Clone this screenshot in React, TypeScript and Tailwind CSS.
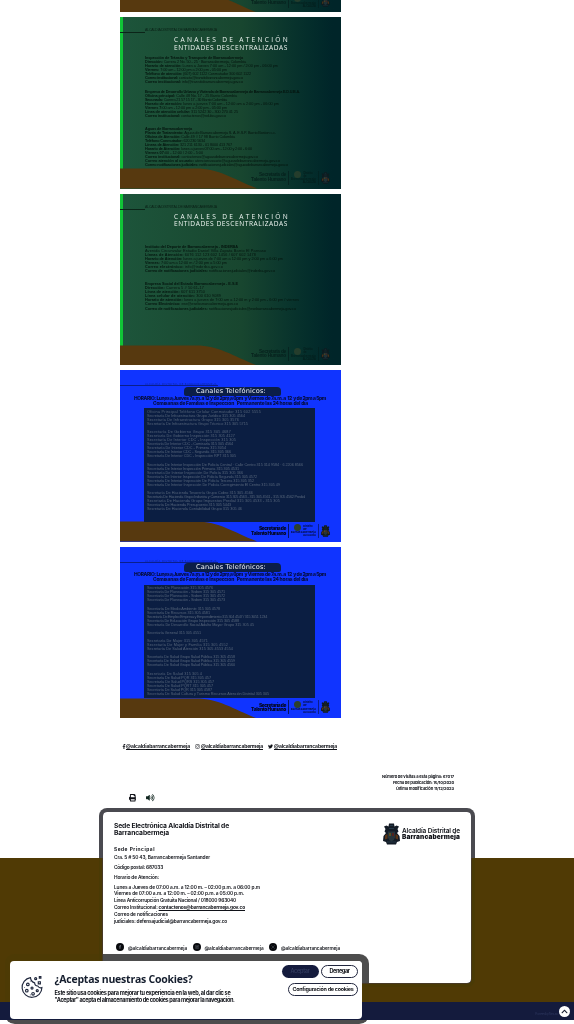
import React, { useLayoutEffect, useRef, useState } from "react";
import { FaFacebookF, FaInstagram, FaTwitter, FaPrint, FaVolumeUp, FaChevronUp } from "react-icons/fa";

/** Single line of text tracked so that it spans the given width. */
function Fit({ w, className = "", children }: { w: number; className?: string; children: React.ReactNode }) {
  const ref = useRef<HTMLSpanElement>(null);
  const [spacing, setSpacing] = useState(0);
  useLayoutEffect(() => {
    const el = ref.current;
    if (!el) return;
    const n = (el.textContent || "").length;
    if (n > 1) setSpacing((w - el.getBoundingClientRect().width) / n);
  }, [w]);
  return (
    <span className={`block whitespace-nowrap ${className}`}>
      <span ref={ref} style={{ letterSpacing: `${spacing}px` }}>{children}</span>
    </span>
  );
}

type Row = [string, number];

function Block({ rows, className, boldFirst = false }: { rows: Row[]; className: string; boldFirst?: boolean }) {
  return (
    <div className={className}>
      {rows.map(([t, w], i) => {
        const cut = t.indexOf(":");
        return (
          <Fit key={i} w={w} className={i === 0 && boldFirst ? "font-bold" : ""}>
            {boldFirst && cut > 0 ? (<><b>{t.slice(0, cut + 1)}</b>{t.slice(cut + 1)}</>) : t}
          </Fit>
        );
      })}
    </div>
  );
}

function Crest({ className, dark = false }: { className: string; dark?: boolean }) {
  return (
    <svg viewBox="0 0 34 44" className={className} preserveAspectRatio="none">
      <path d="M12 1h10l1 6 4-2 5 2-3 5 2 5-3 3 5 6 1 10-6 2-2 5H8l-2-5-6-2 1-10 5-6-3-3 2-5-3-5 5-2 4 2z" fill={dark ? "#131b26" : "#11191d"} />
      <path d="M10 17h14v12q-1 6-7 8-6-2-7-8z" fill="#26343b" />
      <path d="M4 25l5-3v9l-5 2zM25 22l5 3v8l-5-2z" fill="#5a3416" />
      <path d="M12 20h4v6h-4z" fill="#5a4c20" />
      <path d="M18 20h4v6h-4z" fill="#52231f" />
      <path d="M14 5h6M12 11h10M8 38h18" stroke="#2f4a5d" strokeWidth="1.2" />
    </svg>
  );
}

function Wave() {
  return (
    <svg viewBox="0 0 221 172" className="absolute inset-0 h-full w-full" preserveAspectRatio="none">
      <path d="M0 152H76C99 152 114 163 137 172H0z" fill="#57390f" />
    </svg>
  );
}

function Sign({ strong }: { strong: boolean }) {
  return (
    <div className={`absolute right-[11px] bottom-[3px] flex h-[16px] items-center gap-[2px] ${strong ? "text-[#03081f]" : "text-[#041a18] opacity-80"}`}>
      <div className="flex flex-col items-end text-[4.8px] leading-[4.4px] font-black">
        <Fit w={27}>Secretaría de</Fit>
        <Fit w={35}>Talento Humano</Fit>
      </div>
      <div className="h-[14px] w-px bg-current opacity-70" />
      <div className="flex w-[25px] flex-col items-center text-[2.6px] leading-[3px] font-bold">
        <div className="flex items-center gap-[2px]">
          <span className="h-[7px] w-[7px] rounded-full bg-[#2d402c]" />
          <span>Distrito<br />de</span>
        </div>
        <Fit w={25}>Barrancabermeja</Fit>
        <span className="self-end">ALCALDÍA</span>
      </div>
      <div className="h-[14px] w-px bg-current opacity-50" />
      <Crest className="h-[12px] w-[9px]" />
    </div>
  );
}

function GreenPoster({ children }: { children?: React.ReactNode }) {
  return (
    <div className="relative h-[171.5px] w-[221px] shrink-0 overflow-hidden bg-linear-to-r from-[#1d553b] via-[#18462f] via-55% to-[#002529] to-96% font-['Liberation_Sans'] text-[3.8px] leading-[4.1px] text-[#04140e]">
      <div className="absolute top-0 left-0 h-[153px] w-[3px] bg-[#10c536]" />
      <Wave />
      <div className="relative pl-[25px]">{children}</div>
      <Sign strong={false} />
    </div>
  );
}

function GreenHead() {
  return (
    <>
      <div className="-ml-[25px] flex h-[19px] flex-col justify-end pb-[3px]">
        <Fit w={72} className="pl-[25px] text-[3.5px] leading-[3.2px] text-[#0a2016]">ALCALDÍA DISTRITAL DE BARRANCABERMEJA</Fit>
        <div className="h-[0.6px] w-[25px] bg-[#0b2418]" />
      </div>
      <div className="ml-[29px] font-['Open_Sans'] text-[6.6px] leading-[7.5px] font-medium text-[#eef5f1]">
        <Fit w={116}>CANALES DE ATENCIÓN</Fit>
        <Fit w={114}>ENTIDADES DESCENTRALIZADAS</Fit>
      </div>
    </>
  );
}

function BluePoster({ groups }: { groups: Row[][] }) {
  return (
    <div className="relative h-[171.5px] w-[221px] shrink-0 overflow-hidden bg-[#1034ff] font-['Inter']">
      <Wave />
      <div className="relative flex h-full flex-col">
        <div className="h-[13px] shrink-0" />
        <div className="h-[3px] w-[98px] shrink-0 border-b border-[#0a1f8c] pl-[25px] text-[2.6px] leading-[2.5px] text-[#0b2396]">
          <Fit w={72}>ALCALDÍA DISTRITAL DE BARRANCABERMEJA</Fit>
        </div>
        <div className="ml-[64px] mt-[0.5px] h-[9px] w-[97px] shrink-0 rounded-t-[4px] rounded-b-[2px] bg-[#0b1e48] pl-[12px] font-['DejaVu_Sans'] text-[6.6px] leading-[9px] text-[#eef2f6]">
          <Fit w={70}>Canales Telefónicos:</Fit>
        </div>
        <div className="shrink-0 text-[4.9px] leading-[5.4px] font-extrabold text-[#050d3d]">
          <Fit w={192} className="pl-[14px]">HORARIO: Lunes a Jueves 7a.m. a 12 y de 2pm a 6pm &nbsp;y Viernes de 7a.m. a &nbsp;12 &nbsp;y de 2pm a 5pm</Fit>
          <Fit w={155} className="pl-[33px]">Comisarías de Familias e Inspección &nbsp; Permanente las 24 horas del día</Fit>
        </div>
        <div className="mt-[2px] ml-[24px] flex h-[113.5px] w-[171px] shrink-0 flex-col gap-[4.1px] bg-[#0b1e42] pt-[1.5px] pl-[3px] font-['Liberation_Sans'] text-[3.8px] leading-[4.05px] text-[#56657a]">
          {groups.map((g, i) => <Block key={i} rows={g} className="shrink-0" />)}
        </div>
      </div>
      <Sign strong />
    </div>
  );
}

const transit: Row[] = [
  ["Inspección de Tránsito y Transporte de Barrancabermeja", 98],
  ["Dirección: Carrera 2 No. 50 - 25 · Barrancabermeja, Colombia", 101],
  ["Horario de atención: Lunes a Jueves 7:00 am - 12:00 pm / 2:00 pm - 06:00 pm", 133],
  ["Viernes: 7:00 am - 12:00 pm a 2:00 pm - 05:00 pm", 82],
  ["Teléfono de atención: (607) 602 1122 Conmutador 300 602 1122", 106],
  ["Correo institucional: contacto@transitobarrancabermeja.gov.co", 98],
  ["Correo institucional: info@transitobarrancabermeja.gov.co", 98],
];
const eduba: Row[] = [
  ["Empresa de Desarrollo Urbano y Vivienda de Barrancabermeja de Barrancabermeja E.D.U.B.A.", 155],
  ["Oficina principal: Calle 48 No. 17 - 25 Barrio Colombia", 92],
  ["Secunada: Carrera 21 57 15 17 - 30 Barrio Colombia", 82],
  ["Horario de atención: lunes a jueves 7:00 am - 12:00 am a 2:00 pm - 06:00 pm", 134],
  ["Viernes 7:00 am - 12:00 pm a 2:00 pm - 05:00 pm", 82],
  ["Línea de atención celular: 311 5242 30 - 300 270 41 25", 93],
  ["Correo institucional: contactenos@eduba.gov.co", 81],
];
const aguas: Row[] = [
  ["Aguas de Barrancabermeja", 47],
  ["Planta de Tratamiento: Aguas de Barrancabermeja S. A. E.S.P. Barrio Boston c.c.", 131],
  ["Oficina de Atención: Calle 49 # 17 98 Barrio Colombia", 90],
  ["Teléfono Conmutador: 620 230 5634", 60],
  ["Líneas de Atención: 321 211 6130 - 01 8000 413 767", 87],
  ["Horario de Atención: lunes a jueves 07:00 am - 12:00 y 2:00 - 6:00", 107],
  ["Viernes 07:00 - 12:00 / 2:00 - 5:00", 58],
  ["Correo institucional: contactenos@aguasdebarrancabermeja.gov.co", 113],
  ["Correo atención al usuario: atencionusuario@aguasdebarrancabermeja.gov.co", 135],
  ["Correo notificaciones judiciales: notificacionesjudiciales@aguasdebarrancabermeja.gov.co", 143],
];
const inderba: Row[] = [
  ["Instituto del Deporte de Barrancabermeja - INDERBA", 93],
  ["Avenida Circunvalar Estadio Daniel Villa Zapata Barrio El Parnaso", 121],
  ["Líneas de Atención: 6076 112 123 602 1456 / 607 602 1478", 111],
  ["Horario de Atención: lunes a jueves de 7:00 am a 12:00 pm y 2:00 pm a 6:00 pm", 138],
  ["Viernes: 7:00 am a 12:00 m / 2:00 pm a 5:00 pm", 82],
  ["Correo electrónico: info@inderba.gov.co", 78],
  ["Correo de notificaciones judiciales: notificacionesjudiciales@inderba.gov.co", 130],
];
const ese: Row[] = [
  ["Empresa Social del Estado Barrancabermeja - E.S.E", 93],
  ["Dirección: Carrera 5 # 50 61-17", 59],
  ["Línea de atención: 607 611 3750", 60],
  ["Línea celular de atención: 300 610 9089", 76],
  ["Horario de atención: lunes a jueves de 7:00 am a 12:00 m y 2:00 pm - 6:00 pm / viernes", 154],
  ["Correo Electrónico: ese@esebarrancabermeja.gov.co", 93],
  ["Correo de notificaciones judiciales: notificacionesjudiciales@esebarrancabermeja.gov.co", 151],
];

const phonesA: Row[][] = [
  [["Oficina Principal Teléfono Celular Conmutador 315 602 5555", 114], ["Secretaría De Infraestructura Grupo Jurídico 315 305 4564", 98], ["Secretaría De Infraestructura Grupo 315 305 3576", 92], ["Secretaría De Infraestructura Grupo Técnico 315 305 5715", 101]],
  [["Secretaría De Gobierno Grupo 315 305 4687", 84], ["Secretaría De Gobierno Inspección 315 305 4127", 88], ["Secretaría De Interior CDC - Inspección 315 305", 89], ["Secretaría De Interior CDC - Comisaría 315 305 4564", 86], ["Secretaría De Interior CDC - Primera 315 3054", 79], ["Secretaría De Interior CDC - Segunda 315 305 366", 84], ["Secretaría De Interior CDC - Inspección RPT 315 305", 89]],
  [["Secretaría De Interior Inspección De Policía Central · Calle Centro 315 314 9584 · 6 2206 8566", 156], ["Secretaría De Interior Inspección Primaria 315 305 4531", 92], ["Secretaría De Interior Inspección De Policía 315 305 366", 96], ["Secretaría De Interior Inspección De Policía Segunda 315 305 4572", 110], ["Secretaría De Interior Inspección De Policía Tercera 315 305 352", 107], ["Secretaría De Interior Inspección De Policía Corregimiento El Centro 315 305 49", 133]],
  [["Secretaría De Hacienda Tesorería Grupo Cobro 315 305 4566", 106], ["Secretaría De Hacienda Grupo Industria y Comercio 315 305 4563 - 315 305 4561 - 315 305 4562 Predial", 158], ["Secretaría De Hacienda Grupo Impuestos Predial 315 305 4533 - 315 305", 133], ["Secretaría De Hacienda Presupuesto 315 305 5443", 84], ["Secretaría De Hacienda Contabilidad Grupo 315 305 46", 95]],
];
const phonesB: Row[][] = [
  [["Secretaría De Planeación 315 305 4576", 66], ["Secretaría De Planeación - Sisben 315 305 4571", 78], ["Secretaría De Planeación - Sisben 315 305 4572", 78], ["Secretaría De Planeación - Sisben 315 305 4573", 78]],
  [["Secretaría De Medio Ambiente 315 305 4578", 73], ["Secretaría De Recursos 315 305 4581", 63], ["Secretaría De Empleo Empresa y Emprendimiento 315 304 4547 / 315 3051 1234", 120], ["Secretaría De Educación Grupo Inspección 315 305 4588", 92], ["Secretaría De Desarrollo Social Adulto Mayor Grupo 315 305 45", 107]],
  [["Secretaría General 315 305 4551", 54]],
  [["Secretaría De Mujer 315 305 4571", 61], ["Secretaría De Mujer y Familia 315 305 4552", 81], ["Secretaría De Salud Atención 315 305 4553 4554", 86]],
  [["Secretaría De Salud Grupo Salud Pública 315 305 4558", 88], ["Secretaría De Salud Grupo Salud Pública 315 305 4559", 88], ["Secretaría De Salud Grupo Salud Pública 315 305 4560", 88]],
  [["Secretaría De Salud 315 305 4", 55], ["Secretaría De Salud PQR 315 305 457", 64], ["Secretaría De Salud PQRS 315 305 457", 67], ["Secretaría De Salud PQRT 315 305 457", 66], ["Secretaría De Salud PQR 315 305 4587", 65], ["Secretaría De Salud Cultura y Turismo Recursos Atención Distrital 305 305", 122]],
];

function CookieIcon() {
  return (
    <svg viewBox="0 0 44 46" className="h-[24px] w-[23px] shrink-0" fill="none" stroke="#20283d" strokeWidth="2.2">
      <path d="M20 5a19 19 0 1 0 22 19q-5 2-8-3-6 0-6-6-7-2-8-10z" />
      <circle cx="15" cy="18" r="2.5" /><circle cx="23" cy="25" r="2" /><circle cx="13" cy="30" r="2.5" />
      <circle cx="25" cy="36" r="2.5" /><circle cx="33" cy="30" r="2" /><circle cx="30" cy="7" r="2" />
      <path d="M37 3h3v3h-3zM35 13h4v4h-4zM8 24h1M19 38h1M19 12h1" />
    </svg>
  );
}

function XMark() {
  return <svg viewBox="0 0 10 10" className="h-[4px] w-[4px]" stroke="currentColor" fill="none"><path d="M1 1l8 8M9 1L1 9" /></svg>;
}

export default function App() {
  return (
    <div className="relative h-[1024px] w-[574px] overflow-hidden bg-white font-['Inter',sans-serif] text-[#101218]">
      <div className="flex h-[808px] flex-col">
        <div className="flex h-[718px] flex-col justify-end gap-[5px] overflow-hidden pl-[120px]">
          <GreenPoster />
          <GreenPoster>
            <GreenHead />
            <Block boldFirst rows={transit} className="mt-[4.5px]" />
            <Block boldFirst rows={eduba} className="mt-[5.5px]" />
            <Block boldFirst rows={aguas} className="mt-[8.3px]" />
          </GreenPoster>
          <GreenPoster>
            <GreenHead />
            <Block boldFirst rows={inderba} className="mt-[17px]" />
            <Block boldFirst rows={ese} className="mt-[8.8px]" />
          </GreenPoster>
          <BluePoster groups={phonesA} />
          <BluePoster groups={phonesB} />
        </div>
        <div className="mt-[24.5px] flex h-[7px] items-center gap-[5px] pl-[122px] text-[5px] leading-[6px] font-bold">
          <a className="flex items-center underline"><FaFacebookF className="h-[5px] w-[4px]" /><Fit w={64}>@alcaldiabarrancabermeja</Fit></a>
          <a className="flex items-center gap-px underline"><FaInstagram className="h-[5px] w-[5px]" /><Fit w={62}>@alcaldiabarrancabermeja</Fit></a>
          <a className="flex items-center gap-px underline"><FaTwitter className="h-[5px] w-[5px]" /><Fit w={63}>@alcaldiabarrancabermeja</Fit></a>
        </div>
        <div className="mt-[24.5px] flex flex-col items-end pr-[120px] text-[4.1px] leading-[5.8px] font-bold">
          <Fit w={72}>Número de visitas a esta página: 67017</Fit>
          <Fit w={61}>Fecha de publicación: 15/10/2020</Fit>
          <Fit w={58}>Última modificación 11/12/2023</Fit>
        </div>
        <div className="mt-[3px] flex gap-[10px] pl-[128.5px]">
          <FaPrint className="h-[7.5px] w-[7.5px]" />
          <FaVolumeUp className="h-[7.5px] w-[8.5px] text-[#10251f]" />
        </div>
      </div>

      <footer className="grid h-[216px] grid-cols-1 grid-rows-[194px_18px_4px]">
        <div className="col-start-1 row-start-1 mt-[50px] bg-[#503a05]" />
        <div className="col-start-1 row-start-1 mt-[4px] ml-[103px] h-[171px] w-[368px] rounded-[4px] mix-blend-darken shadow-[0_0_0_4px_#4a4a50]" />
        <div className="col-start-1 row-start-1 mt-[4px] ml-[103px] h-[171px] w-[368px] rounded-[4px] bg-white pt-[11px] pr-[11px] pl-[11px] ring-[0.5px] ring-[#3e3848]">
          <div className="flex h-[23px] justify-between">
            <div className="text-[6.7px] leading-[7px] font-bold">
              <Fit w={115}>Sede Electrónica Alcaldía Distrital de</Fit>
              <Fit w={55}>Barrancabermeja</Fit>
            </div>
            <div className="flex items-center gap-[2px] self-start">
              <Crest dark className="h-[22px] w-[17px]" />
              <div className="text-[6.5px] leading-[6.2px]">
                <Fit w={58} className="font-semibold">Alcaldía Distrital de</Fit>
                <Fit w={58} className="font-black">Barrancabermeja</Fit>
              </div>
            </div>
          </div>
          <div className="text-[4.8px] font-semibold">
            <Fit w={41} className="h-[8px] leading-[6px] font-bold">Sede Principal</Fit>
            <Fit w={96} className="h-[10px] leading-[7px]">Cra. 5 # 50 43, Barrancabermeja Santander</Fit>
            <Fit w={49} className="h-[10px] leading-[7px]">Código postal: 687033</Fit>
            <Fit w={45} className="h-[9.5px] leading-[7px]">Horario de Atención:</Fit>
            <div className="leading-[6.85px]">
              <Fit w={146}>Lunes a Jueves de 07:00 a.m. a 12:00 m. – 02:00 p.m. a 06:00 p.m</Fit>
              <Fit w={130}>Viernes de 07:00 a.m. a 12:00 m. – 02:00 p.m. a 05:00 p.m.</Fit>
              <Fit w={122}>Línea Anticorrupción Gratuita Nacional / 018000 963040</Fit>
              <Fit w={131}>Correo Institucional: <u className="font-bold">contactenos@barrancabermeja.gov.co</u></Fit>
              <Fit w={54}>Correo de notificaciones</Fit>
              <Fit w={113}>judiciales: defensajudicial@barrancabermeja.gov.co</Fit>
            </div>
          </div>
          <div className="mt-[17px] ml-[2px] flex items-center text-[4.7px] leading-[8px] font-semibold">
            {[<FaFacebookF key="f" className="h-[4px] w-[4px]" />, <FaInstagram key="i" className="h-[4px] w-[4px]" />, <XMark key="x" />].map((icon, i) => (
              <div key={i} className="flex w-[76.5px] items-center gap-[4px]">
                <span className="flex h-[8px] w-[8px] items-center justify-center rounded-full bg-[#08090d] text-[#6b717b]">{icon}</span>
                <Fit w={59} className="pt-[2px]">@alcaldiabarrancabermeja</Fit>
              </div>
            ))}
          </div>
        </div>
        <div className="col-start-1 row-start-2 flex items-center justify-end gap-[2px] bg-[#141b3d] pr-[4px]">
          <Fit w={22} className="pt-[8px] text-[3.5px] text-[#2a3359]">Powered by Nexura</Fit>
          <span className="flex h-[11px] w-[11px] items-center justify-center rounded-full bg-white text-[#141b2d]"><FaChevronUp className="h-[7px] w-[7px]" /></span>
        </div>
      </footer>

      <div className="absolute top-[961px] left-[10px] h-[57.5px] w-[352px] rounded-[4px] mix-blend-darken shadow-[1px_-1px_0_6px_#4d4d4d]" />
      <div className="absolute top-[961px] left-[10px] flex h-[57.5px] w-[352px] rounded-[4px] bg-white pt-[4px] pr-[4px] pl-[10px]">
        <div className="pt-[10px]"><CookieIcon /></div>
        <div className="ml-[11.5px] flex-1 pt-[8px]">
          <Fit w={138} className="font-['Open_Sans'] text-[10.5px] leading-[13px] font-bold text-[#141d2d]">¿Aceptas nuestras Cookies?</Fit>
          <div className="mt-[4px] text-[5.6px] leading-[7.2px] font-bold">
            <Fit w={176}>Este sitio usa cookies para mejorar tu experiencia en la web, al dar clic se</Fit>
            <Fit w={180}>"Aceptar" acepta el almacenamiento de cookies para mejorar la navegación.</Fit>
          </div>
        </div>
        <div className="flex w-[77px] flex-col items-end gap-[4.5px] text-[5.6px] font-bold">
          <div className="flex gap-[2.5px]">
            <button className="flex h-[13px] w-[37px] items-center justify-center rounded-full bg-[#141b3d] font-medium text-[#353e62]"><Fit w={19}>Aceptar</Fit></button>
            <button className="flex h-[13px] w-[37px] items-center justify-center rounded-full border border-[#20253d]"><Fit w={20}>Denegar</Fit></button>
          </div>
          <button className="flex h-[13px] w-[70px] items-center justify-center rounded-full border border-[#20253d] text-[5.4px]"><Fit w={61}>Configuración de cookies</Fit></button>
        </div>
      </div>
    </div>
  );
}
